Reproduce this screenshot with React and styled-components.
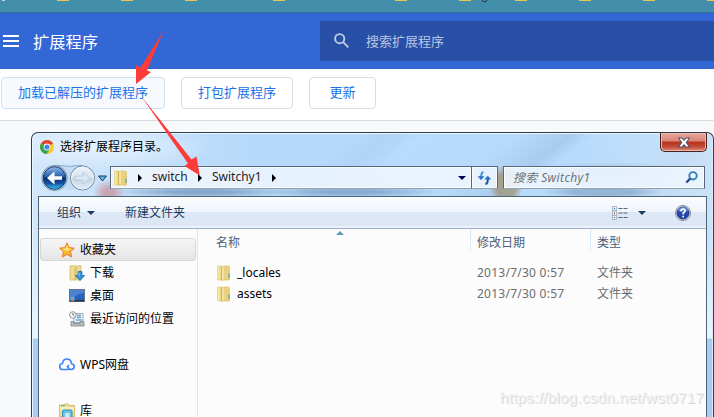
import React from 'react';
import styled, { createGlobalStyle, css } from 'styled-components';

const Global = createGlobalStyle`
  * { box-sizing: border-box; }
  body { margin: 0; overflow: hidden; }
`;

const Page = styled.div`
  position: relative;
  width: 714px;
  height: 417px;
  overflow: hidden;
  display: flex;
  flex-direction: column;
  background: #f8f9fb;
  font: 12px/16px "Noto Sans", "Noto Sans CJK SC", sans-serif;
  color: #000;
`;

const BookmarkStrip = styled.div`
  height: 13px;
  flex: none;
  background: #438fab;
  border-bottom: 1px solid #34718e;
`;

const Header = styled.header`
  height: 56px;
  flex: none;
  display: flex;
  align-items: center;
  background: #3367d6;
`;

const MenuIcon = styled.div`
  width: 16px;
  height: 12px;
  margin-left: 3px;
  border: solid #fff;
  border-width: 2px 0;
  display: flex;
  align-items: center;
  &::after { content: ''; width: 100%; height: 2px; background: #fff; }
`;

const PageTitle = styled.h1`
  margin: 0 0 0 14px;
  width: 273px;
  flex: none;
  font: 400 16.3px/24px "Noto Sans CJK SC", sans-serif;
  color: #fff;
`;

const SearchBox = styled.div`
  margin-left: 14px;
  flex: 1;
  height: 40px;
  border-radius: 2px 0 0 2px;
  background: #2850a7;
  display: flex;
  align-items: center;
  gap: 17px;
  padding: 0 0 1px 14px;
  font: 13px/19px "Noto Sans CJK SC", sans-serif;
  color: #b8c6e4;
`;

const Actions = styled.div`
  height: 52px;
  flex: none;
  display: flex;
  gap: 16px;
  padding: 8px 1px;
  background: #fff;
  border-bottom: 1px solid #dcdde0;
`;

const ActionButton = styled.button`
  width: ${(p) => p.$width}px;
  height: 32px;
  padding: 0 0 2px;
  border: 1px solid ${(p) => (p.$active ? '#cfe1fa' : '#dadce0')};
  border-radius: 4px;
  background: ${(p) => (p.$active ? '#f6faff' : '#fff')};
  color: #1a73e8;
  font: 13px/20px "Noto Sans CJK SC", sans-serif;
`;

const Dialog = styled.section`
  margin: 11px 0 0 31px;
  width: 683px;
  height: 300px;
  flex: none;
  display: flex;
  flex-direction: column;
  border: 1px solid #2f3e4b;
  border-bottom: 0;
  border-radius: 7px 7px 0 0;
  box-shadow: inset 1px 1px 0 #eaf6ff, inset -1px 0 0 #d5ecfb;
  background:
    radial-gradient(ellipse 110px 24px at 75px 14px, #eef7ffd0, #eef7ff00),
    radial-gradient(ellipse 16px 14px at 77px 60px, #c98a91b0 30%, #c98a9100),
    radial-gradient(ellipse 17px 20px at 474px 52px, #9f9273c0 60%, #9f927300),
    radial-gradient(ellipse 90px 6px at 170px 59px, #6f91b7b0 30%, #6f91b700),
    radial-gradient(ellipse 90px 6px at 320px 59px, #6f91b7a0 30%, #6f91b700),
    radial-gradient(ellipse 60px 6px at 570px 59px, #7f9fc3a0 50%, #7f9fc300),
    radial-gradient(ellipse 80px 9px at 575px 38px, #8aa9ca70 30%, #8aa9ca00),
    linear-gradient(180deg, transparent 205px, #a9cdf2 206px),
    linear-gradient(180deg, transparent 100px, #eaf4fd 204px),
    linear-gradient(90deg, #d3e7fb 0, #bddcfa 22%, transparent 32%, transparent 80%, #cbe2f8),
    linear-gradient(142deg, #b8dafa 30%, #b0d3f6 34%, #b8dcfd 37%, #b7dafa 46%, #a9cbed 51%, #b8dbfc 53%, #b7dafa 62%, #a9cbec 64%, #c1dbf6 74%, #cbe2f9 100%);
`;

const TitleBar = styled.div`
  height: 33px;
  flex: none;
  display: flex;
  align-items: flex-start;
  padding-left: 8px;
`;

const DialogTitle = styled.div`
  flex: 1;
  display: flex;
  align-items: center;
  gap: 6px;
  padding-top: 5px;
  line-height: 18px;
`;

const CloseButton = styled.button`
  width: 47px;
  height: 19px;
  margin-right: 6px;
  padding: 0;
  display: flex;
  align-items: center;
  justify-content: center;
  border: 1px solid #4d2020;
  border-top: 0;
  border-radius: 0 0 5px 5px;
  box-shadow: inset 0 0 0 1px #eeb5a9;
  background: linear-gradient(#e6aaa0 0, #d98475 45%, #b8321f 50%, #c04a36 75%, #dc8d74 100%);
`;

const NavRow = styled.div`
  height: 23px;
  flex: none;
  display: flex;
  align-items: center;
  padding: 0 8px;
`;

const NavButtons = styled.div`
  width: 70px;
  height: 28px;
  flex: none;
`;

const glassField = css`
  height: 23px;
  display: flex;
  align-items: center;
  border: 1px solid #56687a;
  border-bottom-color: #8fa2b4;
  background: linear-gradient(90deg, #f0f6fce8, #eaf4fee8 50%, #eff6fde8);
  box-shadow: inset 0 0 0 1px #f8fcff;
`;

const AddressBar = styled.div`
  ${glassField}
  width: 362px;
  padding-left: 2px;
`;

const Crumb = styled.span`
  width: ${(p) => p.$width}px;
  margin: 0 10px 2px;
  color: #1e1e1e;
`;

const Triangle = styled.i`
  flex: none;
  border: 4px solid transparent;
  border-left-color: #000;
  border-right: 0;
`;

const Caret = styled.i`
  flex: none;
  border: 4px solid transparent;
  border-top-color: ${(p) => p.$color};
  border-bottom: 0;
`;

const CrumbList = styled.div`
  flex: 1;
  display: flex;
  align-items: center;
  padding-left: 9px;
`;

const AddressEnd = styled.div`
  padding-right: 5px;
  display: flex;
`;

const RefreshButton = styled.button`
  ${glassField}
  width: 26px;
  padding: 0;
  border-left: 0;
  justify-content: center;
`;

const FolderSearch = styled.div`
  ${glassField}
  width: 202px;
  margin-left: 5px;
  padding: 0 6px 0 9px;
  justify-content: space-between;
  font-style: italic;
  letter-spacing: 0.35px;
  color: #707478;
`;

const Body = styled.div`
  margin: 7px 6px 0;
  flex: 1;
  min-height: 0;
  display: flex;
  flex-direction: column;
  border: 1px solid #4e6479;
  border-bottom: 0;
  background: #fcfcfc;
`;

const CommandBar = styled.div`
  height: 32px;
  flex: none;
  display: flex;
  align-items: center;
  padding: 0 15px 0 18px;
  background: linear-gradient(#fbfdff 0, #eff5fc 47%, #dde7f5 50%, #dce6f4 92%, #eaf2fb 94%);
  border-bottom: 1px solid #a0afc9;
  color: #1e395b;
`;

const Command = styled.span`
  display: flex;
  align-items: center;
  gap: 6px;
  margin-right: 30px;
`;

const CommandRight = styled.div`
  margin-left: auto;
  display: flex;
  align-items: center;
`;

const ViewButton = styled.span`
  display: flex;
  align-items: center;
  gap: 10px;
  margin-right: 29px;
`;

const Panes = styled.div`
  flex: 1;
  min-height: 0;
  display: flex;
`;

const Sidebar = styled.nav`
  width: 159px;
  flex: none;
  padding: 9px 1px 0;
  border-right: 1px solid #d9e5f3;
  display: flex;
  flex-direction: column;
`;

const SideItem = styled.div`
  height: 23px;
  flex: none;
  display: flex;
  align-items: center;
  gap: 5px;
  padding-left: ${(p) => (p.$nested ? 29 : 19)}px;
  margin-top: ${(p) => (p.$gap ? 23 : 0)}px;
  ${(p) =>
    p.$selected &&
    css`
      padding-left: 18px;
      border: 1px solid #d6d6d6;
      border-radius: 3px;
      background: linear-gradient(#f6f6f6, #e5e5e5);
    `}
`;

const Files = styled.div`
  flex: 1;
  display: flex;
  flex-direction: column;
`;

const columns = css`
  display: grid;
  grid-template-columns: 273px 120px 1fr;
`;

const FileHead = styled.div`
  ${columns}
  height: 33px;
  color: #4c607a;
`;

const HeadCell = styled.div`
  height: 24px;
  padding: ${(p) => (p.$first ? '6px 0 0 18px' : '6px 0 0 6px')};
  border-right: ${(p) => (p.$last ? 0 : '1px')} solid;
  border-image: linear-gradient(#cfe4f7, #eaf4fc) 1;
  display: flex;
`;

const SortMark = styled.i`
  width: 0;
  height: 0;
  margin: -4px 0 0 96px;
  border: 4px solid transparent;
  border-top: 0;
  border-bottom-color: #5a9bbd;
`;

const FileRow = styled.div`
  ${columns}
  height: 21px;
  align-items: center;
  color: #6d6d6d;
`;

const FileName = styled.span`
  display: flex;
  align-items: center;
  gap: 5px;
  padding-left: 18px;
  color: #000;
`;

const Cell = styled.span`
  padding-left: 6px;
  letter-spacing: ${(p) => (p.$date ? 0.25 : 0)}px;
`;

const Overlay = styled.svg`
  position: absolute;
  inset: 0;
`;

const Watermark = styled.div`
  position: absolute;
  left: 500px;
  top: 389px;
  font: 15.4px/18px "Liberation Sans", sans-serif;
  letter-spacing: 0.17px;
  color: #f0f0f0;
  text-shadow: 1px 1px 0 #d9d9d9;
  white-space: nowrap;
`;

const TABS = [57, 121, 185, 273, 395, 459, 515, 579, 643, 707];

const BookmarkEdges = () => (
  <svg width="714" height="3" display="block">
    <rect x="2" width="3" height="1" fill="#c4d7e5" />
    {TABS.map((x) => (
      <rect key={x} x={x} width="12" height="1" fill="#e8c44a" />
    ))}
    <path d="M482.500 0v1l1 .6h2.500l1-1.600" fill="none" stroke="#20343f" />
  </svg>
);

const SearchGlyph = () => (
  <svg width="15" height="15" viewBox="0 0 15 15" fill="none" stroke="#c0cce6" strokeWidth="1.9">
    <circle cx="5.700" cy="5.700" r="4.600" />
    <path d="M9.200 9.200 14.300 14.300" />
  </svg>
);

const ChromeIcon = () => (
  <svg width="14" height="14" viewBox="0 0 14 14">
    <circle cx="7" cy="7" r="7" fill="#f8c928" />
    <path d="M7 7 .94 3.500A7 7 0 0 1 13.060 3.500Z" fill="#e04634" />
    <path d="M.94 3.500A7 7 0 0 0 6.600 14L10 8.700 7 7z" fill="#36a353" />
    <circle cx="7" cy="7" r="3.400" fill="#fff" />
    <circle cx="7" cy="7" r="2.600" fill="#4483e8" />
  </svg>
);

const CloseGlyph = () => (
  <svg width="12" height="11" viewBox="0 0 12 11">
    <path d="M1.500 1.500h2.300L6 4l2.200-2.500h2.300L7.700 5.500l2.800 4H8.200L6 7 3.800 9.500H1.500l2.800-4z" fill="#fff" stroke="#4c4f60" strokeWidth="2" paintOrder="stroke" />
  </svg>
);

const HistoryIcons = () => (
  <svg width="70" height="28" viewBox="0 0 70 28">
    <defs>
      <linearGradient id="back" x2="0" y2="1">
        <stop offset="0" stopColor="#8eb9e8" />
        <stop offset=".43" stopColor="#2862ae" />
        <stop offset=".5" stopColor="#08306f" />
        <stop offset=".72" stopColor="#124c9c" />
        <stop offset="1" stopColor="#39c9fa" />
      </linearGradient>
      <linearGradient id="fwd" x2="0" y2="1">
        <stop offset="0" stopColor="#edf4fc" />
        <stop offset=".48" stopColor="#d9e5f2" />
        <stop offset=".52" stopColor="#c3d3e4" />
        <stop offset="1" stopColor="#e4effa" />
      </linearGradient>
    </defs>
    <path d="M14 1.500h29v24H14z" fill="#a9c6e4" opacity=".3" />
    <path d="M14 1.500C25 1.500 27 2.500 29 2.500s4-1 14-1" fill="none" stroke="#8ba7c5" />
    <circle cx="14.500" cy="14" r="12.600" fill="#e6f2ff" stroke="#718baa" />
    <circle cx="14.500" cy="14" r="11.300" fill="url(#back)" stroke="#15386d" />
    <path d="M7 14l7.500-6.500v4.700H22v3.600h-7.500v4.700z" fill="#fff" />
    <circle cx="42.500" cy="14" r="12" fill="url(#fwd)" stroke="#6e8299" />
    <circle cx="42.500" cy="14" r="11" fill="none" stroke="#eef6fd" />
    <path d="M50 14l-7-6v4h-8v4h8v4z" fill="#dce8f4" stroke="#b2c4d7" strokeWidth=".8" />
    <path d="M58.500 12h8l-4 5z" fill="#5eb2e4" stroke="#183f70" />
  </svg>
);

const FolderIcon = () => (
  <svg width="16" height="16" viewBox="0 0 16 16">
    <defs>
      <linearGradient id="folder">
        <stop offset="0" stopColor="#f8eeb0" />
        <stop offset=".55" stopColor="#eedc86" />
        <stop offset="1" stopColor="#dcc267" />
      </linearGradient>
    </defs>
    <path d="M8 1h4.500l1 1v13H7z" fill="#e8d27a" stroke="#d6bb65" strokeWidth=".6" />
    <path d="M1.500 1H6l1 1v13H2l-.5-1z" fill="url(#folder)" stroke="#dac575" strokeWidth=".6" />
    <path d="M5 2.500 8.500.8V14L6 15.700 5 15z" fill="#cfb35c" />
    <path d="M6 2.300 8.500 1v13L6 15.300z" fill="#f2e4a0" />
    <path d="M13 8.500v4.500" stroke="#5a9eab" strokeWidth="1.200" />
  </svg>
);

const RefreshIcon = () => (
  <svg width="15" height="14" viewBox="0 0 15 14" fill="none" stroke="#2674bd" strokeWidth="2">
    <path d="M6.500 1Q4 1.500 4.200 6" stroke="#3c9bd8" />
    <path d="M.5 5.200h7L4 9z" fill="#2674bd" stroke="none" />
    <path d="M8.500 13q2.500-.5 2.300-5" stroke="#1b4f98" />
    <path d="M7.300 8.600h7l-3.500-3.800z" fill="#2674bd" stroke="none" />
  </svg>
);

const MagnifierIcon = () => (
  <svg width="13" height="13" viewBox="0 0 13 13" fill="none">
    <circle cx="8" cy="4.800" r="3.700" fill="#eef8ff" stroke="#2f80bd" strokeWidth="1.900" />
    <path d="M5.200 7.600 1.300 11.500" stroke="#244b91" strokeWidth="2.300" />
  </svg>
);

const ViewIcon = () => (
  <svg width="16" height="14" viewBox="0 0 16 14">
    {[['#2d70b9', 2.5], ['#c34637', 7], ['#398252', 11.5]].map(([c, y]) => (
      <g key={y}>
        <rect x=".5" y={y - 2} width="4" height="4" fill="#fff" stroke="#9ba8ba" strokeWidth=".8" />
        <rect x="1.800" y={y - 0.7} width="1.400" height="1.400" fill={c} />
        <path d={`M6.500 ${y}h4M11.500 ${y}h4`} stroke="#53667c" strokeWidth="1" />
      </g>
    ))}
  </svg>
);

const HelpIcon = () => (
  <svg width="16" height="16" viewBox="0 0 16 16">
    <circle cx="8" cy="8" r="7.500" fill="#e4e7ee" stroke="#858a95" />
    <circle cx="8" cy="8" r="6" fill="#2546ad" stroke="#183282" />
    <path d="M3 6a5 4 0 0 1 10 0Q8 8 3 6" fill="#6284d4" />
    <path d="M6 6.200Q6 4 8 4t2 1.900Q10 7 8.200 8v1.500M8.200 10.800v1.700" fill="none" stroke="#fff" strokeWidth="1.600" />
  </svg>
);

const StarIcon = () => (
  <svg width="16" height="16" viewBox="0 0 16 16">
    <path d="m8 .8 2.100 4.800 5.200.6-3.800 3.500 1.100 5.200L8 12.300l-4.600 2.600 1.100-5.200L.7 6.200l5.200-.6z" fill="#fbb829" stroke="#e8792d" strokeLinejoin="round" />
    <path d="m8 2.800 1.200 3.600 3.600.6L8 9 3 7l3.800-.6z" fill="#ffe68a" />
  </svg>
);

const DownloadIcon = () => (
  <svg width="16" height="16" viewBox="0 0 16 16">
    <path d="M1 .8h6l1 .8 1-.8h3V15H1z" fill="#eedc98" stroke="#d0b25c" strokeWidth=".7" />
    <path d="M5 2.500 8 1v13l-3 1.500z" fill="#dfc677" />
    <path d="M9 6.500h4v4h2.700l-4.700 5-4.700-5H9z" fill="#2f93d8" stroke="#1862a9" strokeWidth=".7" />
    <path d="M10 7.500v4" stroke="#8ad1f4" />
  </svg>
);

const DesktopIcon = () => (
  <svg width="16" height="14" viewBox="0 0 16 14">
    <rect x=".5" y=".5" width="15" height="12" fill="#295fbd" stroke="#66758e" />
    <path d="M1 1h14v3Q7 5 4 10H1z" fill="#5f94df" opacity=".65" />
    <path d="M1 11h14v1.500H1z" fill="#263347" />
    <circle cx="3.500" cy="10" r="2.200" fill="#58bde8" />
    <path d="M2.200 9.500h2v2h-2z" fill="#e95f34" />
  </svg>
);

const RecentIcon = () => (
  <svg width="16" height="16" viewBox="0 0 16 16">
    <path d="M5 2.500h9v9H5z" fill="#edf3f7" stroke="#9da8af" />
    <path d="M8 4.500h4M8 6.500h4M7 9h6" stroke="#6ba8cc" strokeWidth="1.300" />
    <path d="M2 10.500h3v2h6v-2h4V15H2z" fill="#b5bbbe" stroke="#81898e" strokeWidth=".8" />
    <circle cx="3.800" cy="4" r="3.300" fill="#f4f7f8" stroke="#8c979f" />
    <path d="M3.800 2v2h1.500" fill="none" stroke="#52606b" strokeWidth=".8" />
  </svg>
);

const CloudIcon = () => (
  <svg width="16" height="13" viewBox="0 0 16 13" fill="none" stroke="#4285f0" strokeWidth="1.700">
    <path d="M9.500 11.500H4a3 3 0 0 1-.5-6Q4 1 8 1t4.500 4.600Q15.200 6 15.200 8.500q0 3-3.700 3-1.500 0-3-3L10 7.200" />
  </svg>
);

const LibraryIcon = () => (
  <svg width="16" height="16" viewBox="0 0 16 16">
    <path d="M.5 2h4l1-1H9l1 1.500h5.500V14H.5z" fill="#ecdc97" stroke="#cbb05c" strokeWidth=".8" />
    <path d="M2 2.600h4" stroke="#66b16b" />
    <path d="M1 4h14v4H1z" fill="#f7edc1" />
    <rect x="3.500" y="7" width="9.500" height="9" rx="1" fill="#69c2df" stroke="#318eb7" />
    <rect x="6" y="10" width="4.500" height="6" fill="#c5ecf7" />
  </svg>
);

const SIDE_ITEMS = [
  { label: '收藏夹', icon: <StarIcon />, selected: true },
  { label: '下载', icon: <DownloadIcon />, nested: true },
  { label: '桌面', icon: <DesktopIcon />, nested: true },
  { label: '最近访问的位置', icon: <RecentIcon />, nested: true },
  { label: 'WPS网盘', icon: <CloudIcon />, gap: true },
  { label: '库', icon: <LibraryIcon />, gap: true },
];

export default function App() {
  return (
    <Page>
      <Global />
      <BookmarkStrip><BookmarkEdges /></BookmarkStrip>
      <Header>
        <MenuIcon />
        <PageTitle>扩展程序</PageTitle>
        <SearchBox><SearchGlyph />搜索扩展程序</SearchBox>
      </Header>
      <Actions>
        <ActionButton $width={164} $active>加载已解压的扩展程序</ActionButton>
        <ActionButton $width={112}>打包扩展程序</ActionButton>
        <ActionButton $width={67}>更新</ActionButton>
      </Actions>
      <Dialog>
        <TitleBar>
          <DialogTitle><ChromeIcon />选择扩展程序目录。</DialogTitle>
          <CloseButton><CloseGlyph /></CloseButton>
        </TitleBar>
        <NavRow>
          <NavButtons><HistoryIcons /></NavButtons>
          <AddressBar>
            <FolderIcon />
            <CrumbList>
              <Triangle />
              <Crumb $width={36}>switch</Crumb>
              <Triangle />
              <Crumb $width={50}>Switchy1</Crumb>
              <Triangle />
            </CrumbList>
            <AddressEnd><Caret $color="#00005c" /></AddressEnd>
          </AddressBar>
          <RefreshButton><RefreshIcon /></RefreshButton>
          <FolderSearch>搜索 Switchy1<MagnifierIcon /></FolderSearch>
        </NavRow>
        <Body>
          <CommandBar>
            <Command>组织<Caret $color="#1e395b" /></Command>
            <Command>新建文件夹</Command>
            <CommandRight>
              <ViewButton><ViewIcon /><Caret $color="#1e395b" /></ViewButton>
              <HelpIcon />
            </CommandRight>
          </CommandBar>
          <Panes>
            <Sidebar>
              {SIDE_ITEMS.map((item) => (
                <SideItem key={item.label} $nested={item.nested} $gap={item.gap} $selected={item.selected}>
                  {item.icon}{item.label}
                </SideItem>
              ))}
            </Sidebar>
            <Files>
              <FileHead>
                <HeadCell $first>名称<SortMark /></HeadCell>
                <HeadCell>修改日期</HeadCell>
                <HeadCell $last>类型</HeadCell>
              </FileHead>
              {['_locales', 'assets'].map((name) => (
                <FileRow key={name}>
                  <FileName><FolderIcon />{name}</FileName>
                  <Cell $date>2013/7/30 0:57</Cell>
                  <Cell>文件夹</Cell>
                </FileRow>
              ))}
            </Files>
          </Panes>
        </Body>
      </Dialog>
      <Overlay width="714" height="417" viewBox="0 0 714 417">
        <path d="M163.500 31 147 70.500 151 72 136 84V65l4.500 2.500Z" fill="#fd3b38" />
        <path d="M141 96 191.500 159.500 196.500 156.500 199.800 175.500 184.500 166 188 163.500Z" fill="#fd3b38" />
      </Overlay>
      <Watermark>https://blog.csdn.net/wst0717</Watermark>
    </Page>
  );
}
